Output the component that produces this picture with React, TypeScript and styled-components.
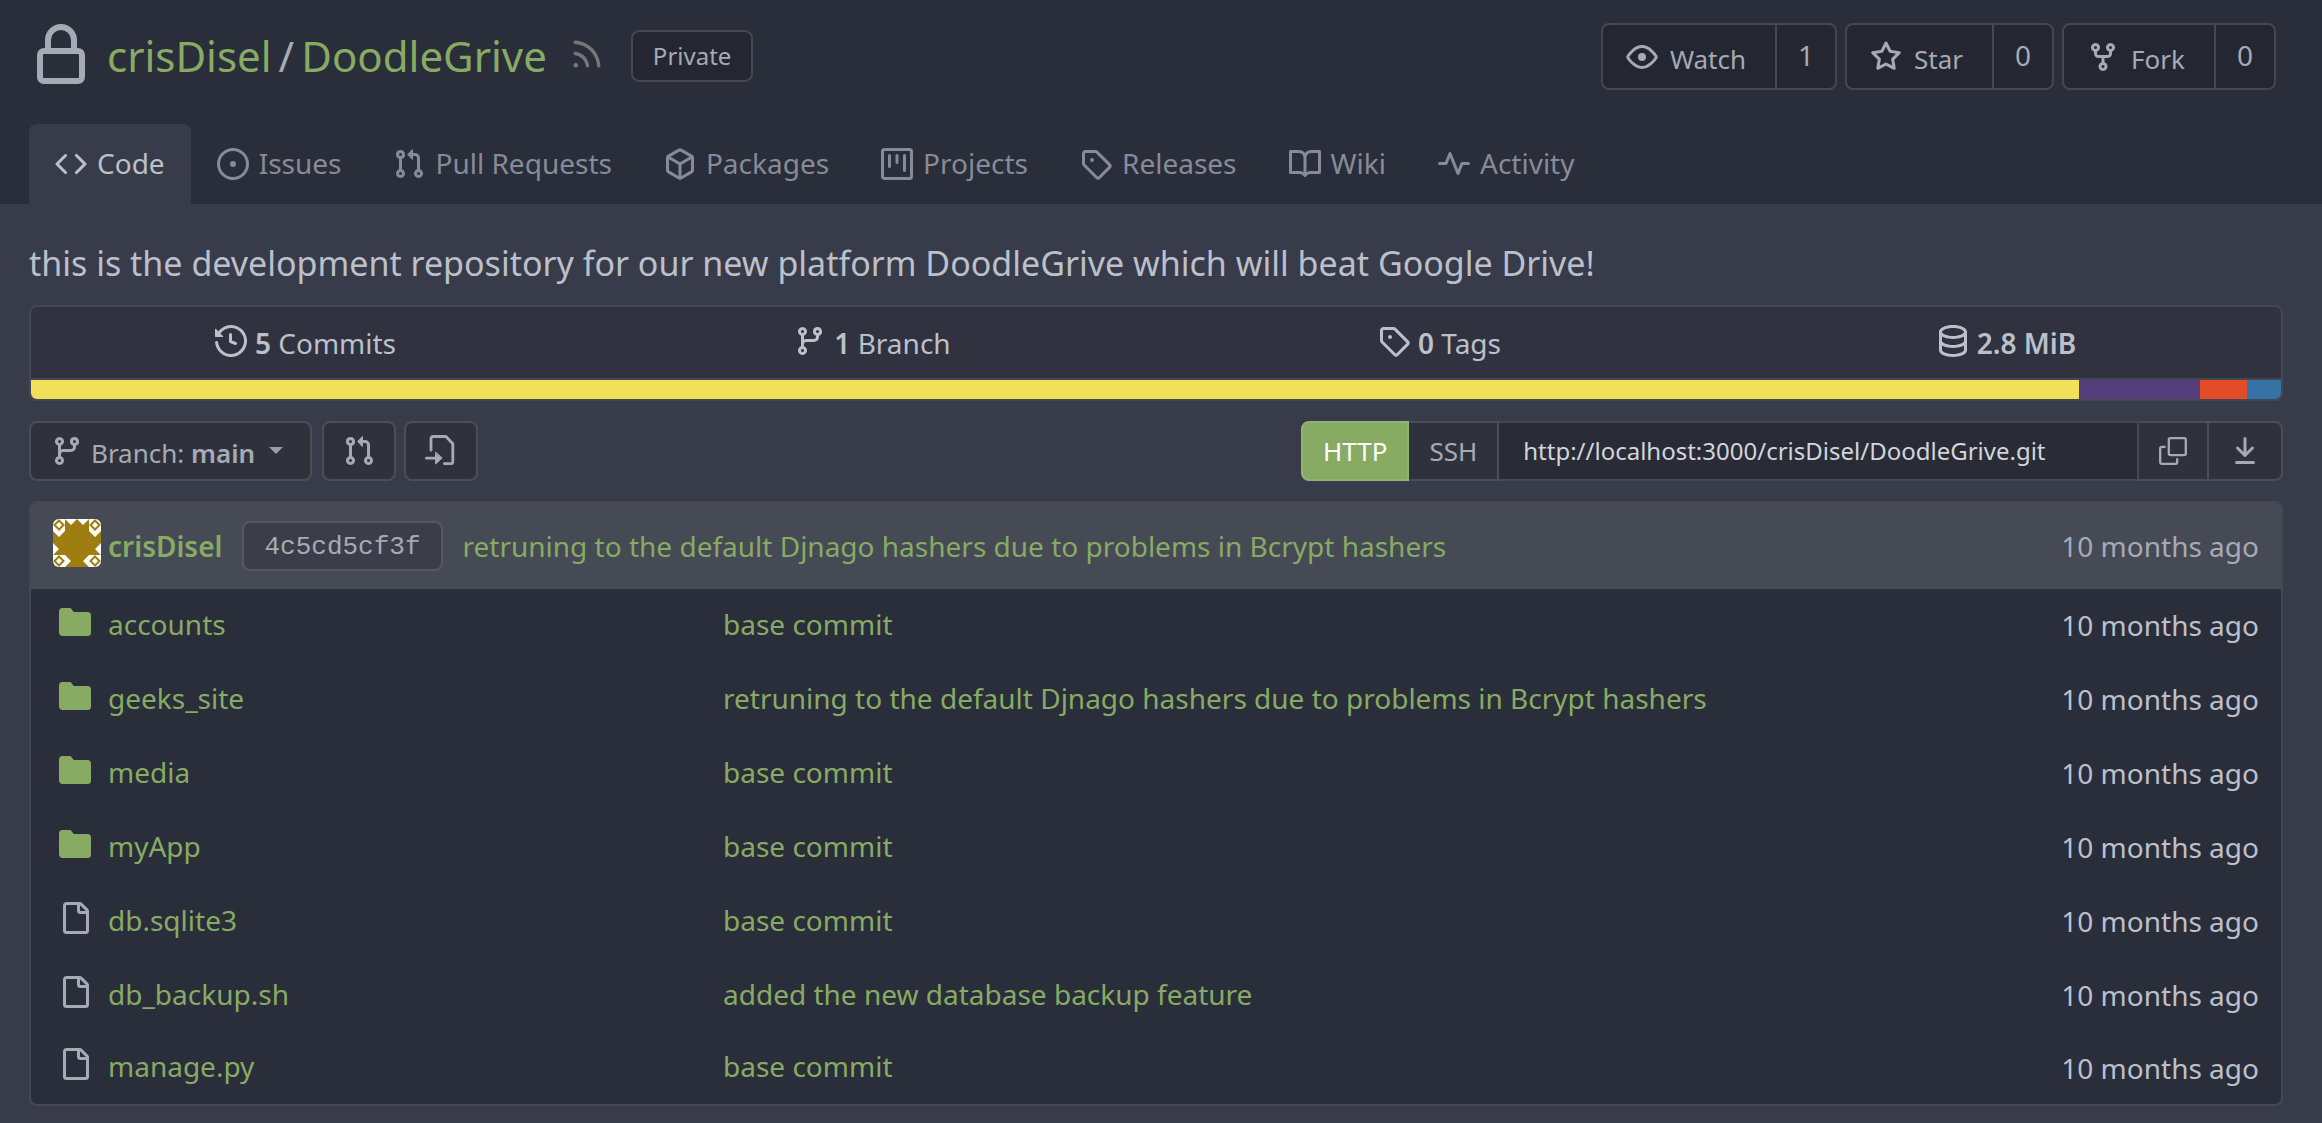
import React from "react";
import styled, { createGlobalStyle } from "styled-components";

const icons = {
  lock: "M4 4v2h-.25A1.75 1.75 0 002 7.75v5.5c0 .966.784 1.75 1.75 1.75h8.5A1.75 1.75 0 0014 13.25v-5.5A1.75 1.75 0 0012.25 6H12V4a4 4 0 10-8 0zm6.5 2V4a2.5 2.5 0 10-5 0v2h5zM12 7.5h.25a.25.25 0 01.25.25v5.5a.25.25 0 01-.25.25h-8.5a.25.25 0 01-.25-.25v-5.5a.25.25 0 01.25-.25H12z",
  rss: "M2.002 2.725a.75.75 0 01.797-.699C8.79 2.42 13.58 7.21 13.974 13.201a.75.75 0 01-1.497.098 10.502 10.502 0 00-9.776-9.776.75.75 0 01-.7-.798zM2 13a1 1 0 112 0 1 1 0 01-2 0zm.84-5.95a.75.75 0 00-.179 1.489c2.509.3 4.5 2.291 4.8 4.8a.75.75 0 101.49-.178A7.003 7.003 0 002.838 7.05z",
  eye: "M1.679 7.932c.412-.621 1.242-1.75 2.366-2.717C5.175 4.242 6.527 3.5 8 3.5c1.473 0 2.824.742 3.955 1.715 1.124.967 1.954 2.096 2.366 2.717a.119.119 0 010 .136c-.412.621-1.242 1.75-2.366 2.717C10.825 11.758 9.473 12.5 8 12.5c-1.473 0-2.824-.742-3.955-1.715C2.92 9.818 2.09 8.69 1.679 8.068a.119.119 0 010-.136zM8 2c-1.981 0-3.67.992-4.933 2.078C1.797 5.169.88 6.423.43 7.1a1.619 1.619 0 000 1.798c.45.678 1.367 1.932 2.637 3.024C4.329 13.008 6.019 14 8 14c1.981 0 3.67-.992 4.933-2.078 1.27-1.091 2.187-2.345 2.637-3.023a1.619 1.619 0 000-1.798c-.45-.678-1.367-1.932-2.637-3.023C11.671 2.992 9.981 2 8 2zm0 8a2 2 0 100-4 2 2 0 000 4z",
  star: "M8 .25a.75.75 0 01.673.418l1.882 3.815 4.21.612a.75.75 0 01.416 1.279l-3.046 2.97.719 4.192a.75.75 0 01-1.088.791L8 12.347l-3.766 1.98a.75.75 0 01-1.088-.79l.72-4.194L.818 6.374a.75.75 0 01.416-1.28l4.21-.611L7.327.668A.75.75 0 018 .25zm0 2.445L6.615 5.5a.75.75 0 01-.564.41l-3.097.45 2.24 2.184a.75.75 0 01.216.664l-.528 3.084 2.769-1.456a.75.75 0 01.698 0l2.77 1.456-.53-3.084a.75.75 0 01.216-.664l2.24-2.183-3.096-.45a.75.75 0 01-.564-.41L8 2.694v.001z",
  fork: "M5 3.25a.75.75 0 11-1.5 0 .75.75 0 011.5 0zm0 2.122a2.25 2.25 0 10-1.5 0v.878A2.25 2.25 0 005.75 8.5h1.5v2.128a2.251 2.251 0 101.5 0V8.5h1.5a2.25 2.25 0 002.25-2.25v-.878a2.25 2.25 0 10-1.5 0v.878a.75.75 0 01-.75.75h-4.5A.75.75 0 015 6.25v-.878zm3.75 7.378a.75.75 0 11-1.5 0 .75.75 0 011.5 0zm3-8.75a.75.75 0 100-1.5.75.75 0 000 1.5z",
  code: "M4.72 3.22a.75.75 0 011.06 1.06L2.06 8l3.72 3.72a.75.75 0 11-1.06 1.06L.47 8.53a.75.75 0 010-1.06l4.25-4.25zm6.56 0a.75.75 0 10-1.06 1.06L13.94 8l-3.72 3.72a.75.75 0 101.06 1.06l4.25-4.25a.75.75 0 000-1.06l-4.25-4.25z",
  issue: "M8 9.5a1.5 1.5 0 100-3 1.5 1.5 0 000 3zM8 0a8 8 0 100 16A8 8 0 008 0zM1.5 8a6.5 6.5 0 1113 0 6.5 6.5 0 01-13 0z",
  pull: "M7.177 3.073L9.573.677A.25.25 0 0110 .854v4.792a.25.25 0 01-.427.177L7.177 3.427a.25.25 0 010-.354zM3.75 2.5a.75.75 0 100 1.5.75.75 0 000-1.5zm-2.25.75a2.25 2.25 0 113 2.122v5.256a2.251 2.251 0 11-1.5 0V5.372A2.25 2.25 0 011.5 3.25zM11 2.5h-1V4h1a1 1 0 011 1v5.628a2.251 2.251 0 101.5 0V5A2.5 2.5 0 0011 2.5zm1 10.25a.75.75 0 111.5 0 .75.75 0 01-1.5 0zM3.75 12a.75.75 0 100 1.5.75.75 0 000-1.5z",
  package: "M8.878.392a1.75 1.75 0 00-1.756 0l-5.25 3.045A1.75 1.75 0 001 4.951v6.098c0 .624.332 1.2.872 1.514l5.25 3.045a1.75 1.75 0 001.756 0l5.25-3.045c.54-.313.872-.89.872-1.514V4.951c0-.624-.332-1.2-.872-1.514L8.878.392zM7.875 1.69a.25.25 0 01.25 0l4.63 2.685L8 7.133 3.245 4.375l4.63-2.685zM2.5 5.677v5.372c0 .09.047.171.125.216l4.625 2.683V8.432L2.5 5.677zm6.25 8.271l4.625-2.683a.25.25 0 00.125-.216V5.677L8.75 8.432v5.516z",
  project: "M1.75 0A1.75 1.75 0 000 1.75v12.5C0 15.216.784 16 1.75 16h12.5A1.75 1.75 0 0016 14.25V1.75A1.75 1.75 0 0014.25 0H1.75zM1.5 1.75a.25.25 0 01.25-.25h12.5a.25.25 0 01.25.25v12.5a.25.25 0 01-.25.25H1.75a.25.25 0 01-.25-.25V1.75zM11.75 3a.75.75 0 00-.75.75v7.5a.75.75 0 001.5 0v-7.5a.75.75 0 00-.75-.75zm-8.25.75a.75.75 0 011.5 0v5.5a.75.75 0 01-1.5 0v-5.5zM8 3a.75.75 0 00-.75.75v3.5a.75.75 0 001.5 0v-3.5A.75.75 0 008 3z",
  tag: "M2.5 7.775V2.75a.25.25 0 01.25-.25h5.025a.25.25 0 01.177.073l6.25 6.25a.25.25 0 010 .354l-5.025 5.025a.25.25 0 01-.354 0l-6.25-6.25a.25.25 0 01-.073-.177zm-1.5 0V2.75C1 1.784 1.784 1 2.75 1h5.025c.464 0 .91.184 1.238.513l6.25 6.25a1.75 1.75 0 010 2.474l-5.026 5.026a1.75 1.75 0 01-2.474 0l-6.25-6.25A1.75 1.75 0 011 7.775zM6 5a1 1 0 100 2 1 1 0 000-2z",
  book: "M0 1.75A.75.75 0 01.75 1h4.253c1.227 0 2.317.59 3 1.501A3.744 3.744 0 0111.006 1h4.245a.75.75 0 01.75.75v10.5a.75.75 0 01-.75.75h-4.507a2.25 2.25 0 00-1.591.659l-.622.621a.75.75 0 01-1.06 0l-.622-.621A2.25 2.25 0 005.258 13H.75a.75.75 0 01-.75-.75V1.75zm8.755 3a2.25 2.25 0 012.25-2.25H14.5v9h-3.757c-.71 0-1.4.201-1.992.572l.004-7.322zm-1.504 7.324l.004-5.073-.002-2.253A2.25 2.25 0 005.003 2.5H1.5v9h3.757a3.75 3.75 0 011.994.574z",
  pulse: "M6 2a.75.75 0 01.696.471L10 10.731l1.304-3.26A.75.75 0 0112 7h3.25a.75.75 0 010 1.5h-2.742l-1.812 4.528a.75.75 0 01-1.392 0L6 4.77 4.696 8.03A.75.75 0 014 8.5H.75a.75.75 0 010-1.5h2.742l1.812-4.529A.75.75 0 016 2z",
  history: "M1.643 3.143L.427 1.927A.25.25 0 000 2.104V5.75c0 .138.112.25.25.25h3.646a.25.25 0 00.177-.427L2.715 4.215a6.5 6.5 0 11-1.18 4.458.75.75 0 10-1.493.154 8.001 8.001 0 101.6-5.684zM7.75 4a.75.75 0 01.75.75v2.992l2.028.812a.75.75 0 01-.557 1.392l-2.5-1A.75.75 0 017 8.25v-3.5A.75.75 0 017.75 4z",
  branch: "M11.75 2.5a.75.75 0 100 1.5.75.75 0 000-1.5zm-2.25.75a2.25 2.25 0 113 2.122V6A2.5 2.5 0 0110 8.5H6a1 1 0 00-1 1v1.128a2.251 2.251 0 11-1.5 0V5.372a2.25 2.25 0 111.5 0v1.836A2.492 2.492 0 016 7h4a1 1 0 001-1v-.628A2.25 2.25 0 019.5 3.25zM4.25 12a.75.75 0 100 1.5.75.75 0 000-1.5zM3.5 3.25a.75.75 0 111.5 0 .75.75 0 01-1.5 0z",
  database: "M2.5 3.5c0-.133.058-.318.282-.55.227-.237.592-.484 1.1-.708C4.899 1.795 6.354 1.5 8 1.5c1.647 0 3.102.295 4.117.742.51.224.874.47 1.101.707.224.233.282.418.282.551 0 .133-.058.318-.282.55-.227.237-.592.484-1.1.708C11.101 5.205 9.646 5.5 8 5.5c-1.647 0-3.102-.295-4.117-.742-.51-.224-.874-.47-1.101-.707-.224-.233-.282-.418-.282-.551zM1 3.5c0-.626.292-1.165.7-1.59.406-.422.956-.767 1.579-1.041C4.525.32 6.195 0 8 0c1.805 0 3.475.32 4.722.869.622.274 1.172.62 1.578 1.04.408.426.7.965.7 1.591v9c0 .626-.292 1.165-.7 1.59-.406.422-.956.767-1.579 1.041C11.476 15.68 9.806 16 8 16c-1.805 0-3.475-.32-4.721-.869-.623-.274-1.173-.62-1.579-1.04-.408-.426-.7-.965-.7-1.591v-9zM2.5 8V5.724c.241.15.503.286.778.407C4.525 6.68 6.195 7 8 7c1.805 0 3.475-.32 4.722-.869.275-.121.537-.257.778-.407V8c0 .133-.058.318-.282.55-.227.237-.592.484-1.1.708C11.101 9.705 9.646 10 8 10c-1.647 0-3.102-.295-4.117-.742-.51-.224-.874-.47-1.101-.707C2.558 8.318 2.5 8.133 2.5 8zm0 2.225V12.5c0 .133.058.318.282.55.227.237.592.484 1.1.708 1.016.447 2.471.742 4.118.742 1.647 0 3.102-.295 4.117-.742.51-.224.874-.47 1.101-.707.224-.233.282-.418.282-.551v-2.275c-.241.15-.503.285-.778.406-1.247.549-2.917.869-4.722.869-1.805 0-3.475-.32-4.721-.869a6.236 6.236 0 01-.779-.406z",
  download: "M7.47 10.78a.75.75 0 001.06 0l3.75-3.75a.75.75 0 00-1.06-1.06L8.75 8.439V1.75a.75.75 0 00-1.5 0V8.44L4.78 5.97a.75.75 0 00-1.06 1.06l3.75 3.75zM3.75 13a.75.75 0 000 1.5h8.5a.75.75 0 000-1.5h-8.5z",
  file: "M2 1.75C2 .784 2.784 0 3.75 0h6.586c.464 0 .909.184 1.237.513l2.914 2.914c.329.328.513.773.513 1.237v9.586A1.75 1.75 0 0113.25 16h-9.5A1.75 1.75 0 012 14.25V1.75zm1.75-.25a.25.25 0 00-.25.25v12.5c0 .138.112.25.25.25h9.5a.25.25 0 00.25-.25V6h-2.75A1.75 1.75 0 019 4.25V1.5H3.75zm6.75.062V4.25c0 .138.112.25.25.25h2.688l-.011-.013-2.914-2.914-.013-.011z",
  folder: "M1.75 1A1.75 1.75 0 000 2.75v10.5C0 14.216.784 15 1.75 15h12.5A1.75 1.75 0 0016 13.25v-8.5A1.75 1.75 0 0014.25 3H7.5a.25.25 0 01-.2-.1l-.9-1.2C6.07 1.26 5.55 1 5 1H1.75z",
};
type IconName = keyof typeof icons;

const Svg = styled.svg<{ $size?: number }>`
  width: ${(p) => p.$size ?? 32}px;
  height: ${(p) => p.$size ?? 32}px;
  flex: none;
  display: block;
  fill: currentColor;
`;
const Icon = ({ name, size }: { name: IconName; size?: number }) => (
  <Svg $size={size} viewBox="0 0 16 16" aria-hidden="true">
    <path fillRule="evenodd" d={icons[name]} />
  </Svg>
);

const GlobalStyle = createGlobalStyle`
  *, *::before, *::after { box-sizing: border-box; }
  body {
    margin: 0;
    background: #383b4a;
    color: #bbc0ca;
    font: 28px/36px "Noto Sans", sans-serif;
  }
  a { color: #87ab63; text-decoration: none; }
  button, input { font: inherit; margin: 0; }
`;

const Header = styled.header`
  background: #2a2e3a;
`;
const TitleBar = styled.div`
  display: flex;
  justify-content: space-between;
  padding: 23px 46px 0 29px;
  height: 124px;
`;
const Title = styled.h1`
  display: flex;
  align-items: center;
  height: 66px;
  margin: 0;
  font-size: 42px;
  line-height: 56px;
  font-weight: 400;
  color: #a6aab5;
`;
const RepoPath = styled.span`
  display: flex;
  gap: 7px;
  margin: 0 22px 0 14px;
`;
const Rss = styled.a`
  color: #777;
  margin-right: 26px;
  padding-bottom: 4px;
`;
const Label = styled.span`
  border: 2px solid #46484f;
  border-radius: 8px;
  background: #242731;
  color: #a6aab5;
  padding: 8px 20px;
  font-size: 24px;
  line-height: 32px;
`;
const Actions = styled.div`
  display: flex;
  gap: 8px;
`;
const Split = styled.div`
  display: flex;
  height: 67px;
  border: 2px solid #46484f;
  border-radius: 8px;
  background: #242731;
  overflow: hidden;
`;
const SplitButton = styled.button`
  display: flex;
  align-items: center;
  gap: 12px;
  border: 0;
  border-right: 2px solid #46484f;
  background: none;
  color: #a6aab5;
  padding: 0 29px 0 23px;
  font-size: 26px;
  line-height: 36px;

  span { padding-top: 4px; }
`;
const SplitCount = styled.a`
  display: flex;
  align-items: center;
  padding: 0 21px 4px;
  color: #a6aab5;
`;
const Tabs = styled.nav`
  display: flex;
  height: 80px;
  padding-left: 29px;
`;
const Tab = styled.a<{ $active?: boolean }>`
  display: flex;
  align-items: center;
  gap: 10px;
  padding: 0 26px;
  border-radius: 8px 8px 0 0;
  color: ${(p) => (p.$active ? "#bbc0ca" : "#878b97")};
  background: ${(p) => (p.$active ? "#383b4a" : "transparent")};

  span { padding-bottom: 2px; }
`;

const Main = styled.main`
  padding: 37px 39px 0 29px;
`;
const Description = styled.p`
  margin: 0 0 19px;
  font-size: 34px;
  line-height: 45px;
`;
const Summary = styled.section`
  border: 2px solid #454852;
  border-radius: 8px;
  background: #30333f;
  overflow: hidden;
`;
const Stats = styled.div`
  display: grid;
  grid-template-columns: repeat(4, 1fr);
  height: 73px;
  margin: 0 -9px;
  border-bottom: 2px solid #454852;
`;
const Stat = styled.a`
  display: flex;
  align-items: center;
  justify-content: center;
  gap: 8px;
  color: #bbc0ca;

  svg { margin-bottom: 4px; }
  b { font-weight: 600; }
`;
const Languages = styled.div`
  display: flex;
  height: 19px;
`;
const Language = styled.span<{ $share: number; $color: string }>`
  flex: ${(p) => p.$share} 0 0;
  background: ${(p) => p.$color};
`;

const Toolbar = styled.div`
  display: flex;
  justify-content: space-between;
  gap: 24px;
  margin: 20px 0;
  height: 60px;
`;
const ToolGroup = styled.div`
  display: flex;
  gap: 8px;
`;
const ToolButton = styled.button`
  display: flex;
  align-items: center;
  justify-content: center;
  padding: 0 19px;
  border: 2px solid #4b4e57;
  border-radius: 8px;
  background: #2f323d;
  color: #a6aab5;
`;
const BranchButton = styled(ToolButton)`
  gap: 8px;
  padding: 0 27px 0 20px;
  margin-right: 2px;
  font-size: 26px;

  b { font-weight: 600; }
  span { padding-top: 4px; }
`;
const Caret = styled.i`
  border: 7px solid transparent;
  border-top-color: currentColor;
  border-bottom: 0;
  margin: 0 0 2px 6px;
  opacity: 0.9;
`;
const ClonePanel = styled.div`
  display: flex;
  width: 982px;
`;
const CloneButton = styled.button<{ $active?: boolean; $edge?: "left" | "right" }>`
  display: flex;
  align-items: center;
  justify-content: center;
  padding: 0 20px;
  border: 2px solid ${(p) => (p.$active ? "#93b373" : "#4b4e57")};
  border-left-width: ${(p) => (p.$edge === "left" ? 2 : 0)}px;
  border-radius: ${(p) =>
    p.$edge === "left" ? "8px 0 0 8px" : p.$edge === "right" ? "0 8px 8px 0" : "0"};
  background: ${(p) => (p.$active ? "#87ab63" : "#2f323d")};
  color: ${(p) => (p.$active ? "#fff" : "#a6aab5")};
  font-size: 26px;
`;
const CopyButton = styled(CloneButton)`
  padding: 0 18px;
`;
const CloneUrl = styled.input`
  flex: 1;
  min-width: 0;
  border: 2px solid #454852;
  border-left: 0;
  border-radius: 0;
  background: #292c37;
  color: #d2d5dc;
  padding: 0 24px;
  font-size: 24px;
  outline: 0;
`;

const FileBox = styled.div`
  border: 2px solid #454852;
  border-radius: 8px;
  background: #2a2e3a;
  overflow: hidden;
`;
const FileTable = styled.table`
  width: 100%;
  border-collapse: collapse;
  table-layout: fixed;
`;
const NameCol = styled.col`
  width: 692px;
`;
const AgeCol = styled.col`
  width: 300px;
`;
const LatestCell = styled.th`
  height: 86px;
  padding: 0 22px;
  background: #454a55;
  font-weight: 400;
  text-align: left;
`;
const Latest = styled.div`
  display: flex;
  align-items: center;
`;
const Author = styled.a`
  display: flex;
  align-items: center;
  gap: 7px;
  font-weight: 600;
  margin-right: 20px;

  svg { margin-bottom: 6px; }
`;
const Hash = styled.a`
  border: 2px solid #565962;
  border-radius: 8px;
  background: #3b3e49;
  color: #a6aab5;
  padding: 7px 20px 5px;
  margin-right: 20px;
  font: 26px/34px "Liberation Mono", monospace;
`;
const LatestAge = styled.span`
  margin-left: auto;
  color: #a6aab5;
`;
const FileRow = styled.tr`
  height: 74px;

  &:last-child { height: 71px; }
`;
const Cell = styled.td`
  padding: 0 22px 5px 0;
`;
const AgeCell = styled(Cell)`
  padding-bottom: 2px;
  text-align: right;
`;
const NameCell = styled(Cell)<{ $folder: boolean }>`
  padding-left: 28px;

  div { display: flex; align-items: center; gap: 17px; }
  svg { color: ${(p) => (p.$folder ? "#87ab63" : "#a6aab5")}; margin-bottom: 4px; }
`;

const tabs: [IconName, string][] = [
  ["code", "Code"],
  ["issue", "Issues"],
  ["pull", "Pull Requests"],
  ["package", "Packages"],
  ["project", "Projects"],
  ["tag", "Releases"],
  ["book", "Wiki"],
  ["pulse", "Activity"],
];
const actions: [IconName, string, number][] = [
  ["eye", "Watch", 1],
  ["star", "Star", 0],
  ["fork", "Fork", 0],
];
const stats: [IconName, string, string][] = [
  ["history", "5", " Commits"],
  ["branch", "1", " Branch"],
  ["tag", "0", " Tags"],
  ["database", "2.8 MiB", ""],
];
const languages: [string, number, string][] = [
  ["JavaScript", 910, "#f1e05a"],
  ["CSS", 54, "#563d7c"],
  ["HTML", 21, "#e34c26"],
  ["Python", 15, "#3572a5"],
];
const latestMessage = "retruning to the default Djnago hashers due to problems in Bcrypt hashers";
const files: [IconName, string, string][] = [
  ["folder", "accounts", "base commit"],
  ["folder", "geeks_site", latestMessage],
  ["folder", "media", "base commit"],
  ["folder", "myApp", "base commit"],
  ["file", "db.sqlite3", "base commit"],
  ["file", "db_backup.sh", "added the new database backup feature"],
  ["file", "manage.py", "base commit"],
];

const AvatarSvg = styled(Svg)`
  width: 48px;
  height: 48px;
  border-radius: 6px;
`;
const Avatar = () => (
  <AvatarSvg viewBox="0 0 48 48" role="img" aria-label="crisDisel avatar">
    <path fill="#9e7e10" d="M0 0h48v48H0z" />
    <path
      fill="#fff"
      d="M0 0h12v12L6 18 0 12zM36 0h12v12l-6 6-6-6zM12 0h24l-6 6-6-6-6 6zM0 24l6 6-6 6zM48 24l-6 6 6 6zM0 36h12l6 6-6 6H0zM48 36H36l-6 6 6 6h12z"
    />
    {[[6, 6], [42, 6], [6, 42], [42, 42]].map(([x, y]) => (
      <path
        key={`${x}-${y}`}
        fill="#fff"
        stroke="#9e7e10"
        strokeWidth="2"
        d={`M${x} ${y - 4.5}l4.5 4.5-4.5 4.5-4.5-4.5z`}
      />
    ))}
  </AvatarSvg>
);

const LineSvg = styled(Svg)`
  fill: none;
  stroke: currentColor;
  stroke-linecap: round;
  stroke-linejoin: round;
`;
const CopyIcon = () => (
  <LineSvg viewBox="0 0 16 16" strokeWidth="1.15" aria-hidden="true">
    <rect x="5.9" y="1.6" width="8.5" height="8.5" rx="0.8" />
    <path d="M3.9 5.9H2.4a.8.8 0 0 0-.8.8v6.9a.8.8 0 0 0 .8.8h6.9a.8.8 0 0 0 .8-.8v-1.5" />
  </LineSvg>
);
const GoToFileIcon = () => (
  <LineSvg viewBox="0 0 16 16" strokeWidth="1.4" aria-hidden="true">
    <path d="M3 7.6V1.75a1 1 0 0 1 1-1h6.5l3.4 3.6v9a1 1 0 0 1-1 1H9.7" />
    <path d="M.75 11.6H6" />
    <path fill="currentColor" strokeWidth="0.5" d="M5.3 8.7v5.8l3.2-2.9z" />
  </LineSvg>
);

export default function App() {
  return (
    <>
      <GlobalStyle />
      <Header>
        <TitleBar>
          <Title>
            <Icon name="lock" size={64} />
            <RepoPath>
              <a href="#owner">crisDisel</a>
              <span>/</span>
              <a href="#repo">DoodleGrive</a>
            </RepoPath>
            <Rss href="#rss" aria-label="RSS feed">
              <Icon name="rss" size={36} />
            </Rss>
            <Label>Private</Label>
          </Title>
          <Actions>
            {actions.map(([icon, label, count]) => (
              <Split key={label}>
                <SplitButton type="button">
                  <Icon name={icon} />
                  <span>{label}</span>
                </SplitButton>
                <SplitCount href={`#${label}`}>{count}</SplitCount>
              </Split>
            ))}
          </Actions>
        </TitleBar>
        <Tabs>
          {tabs.map(([icon, label], i) => (
            <Tab key={label} href={`#${icon}`} $active={i === 0}>
              <Icon name={icon} />
              <span>{label}</span>
            </Tab>
          ))}
        </Tabs>
      </Header>
      <Main>
        <Description>
          this is the development repository for our new platform DoodleGrive which will beat Google Drive!
        </Description>
        <Summary>
          <Stats>
            {stats.map(([icon, value, label]) => (
              <Stat key={icon} href={`#${icon}`}>
                <Icon name={icon} />
                <span>
                  <b>{value}</b>
                  {label}
                </span>
              </Stat>
            ))}
          </Stats>
          <Languages>
            {languages.map(([name, share, color]) => (
              <Language key={name} title={name} $share={share} $color={color} />
            ))}
          </Languages>
        </Summary>
        <Toolbar>
          <ToolGroup>
            <BranchButton type="button">
              <Icon name="branch" />
              <span>
                Branch: <b>main</b>
              </span>
              <Caret />
            </BranchButton>
            <ToolButton type="button" aria-label="New pull request">
              <Icon name="pull" />
            </ToolButton>
            <ToolButton type="button" aria-label="Go to file">
              <GoToFileIcon />
            </ToolButton>
          </ToolGroup>
          <ClonePanel>
            <CloneButton type="button" $active $edge="left">
              HTTP
            </CloneButton>
            <CloneButton type="button">SSH</CloneButton>
            <CloneUrl
              aria-label="Clone URL"
              readOnly
              value="http://localhost:3000/crisDisel/DoodleGrive.git"
            />
            <CopyButton type="button" aria-label="Copy URL">
              <CopyIcon />
            </CopyButton>
            <CloneButton type="button" $edge="right" aria-label="Download">
              <Icon name="download" />
            </CloneButton>
          </ClonePanel>
        </Toolbar>
        <FileBox>
          <FileTable>
            <colgroup>
              <NameCol />
              <col />
              <AgeCol />
            </colgroup>
            <thead>
              <tr>
                <LatestCell colSpan={3}>
                  <Latest>
                    <Author href="#author">
                      <Avatar />
                      crisDisel
                    </Author>
                    <Hash href="#commit">4c5cd5cf3f</Hash>
                    <a href="#commit">{latestMessage}</a>
                    <LatestAge>10 months ago</LatestAge>
                  </Latest>
                </LatestCell>
              </tr>
            </thead>
            <tbody>
              {files.map(([icon, name, message]) => (
                <FileRow key={name}>
                  <NameCell $folder={icon === "folder"}>
                    <div>
                      <Icon name={icon} />
                      <a href={`#${name}`}>{name}</a>
                    </div>
                  </NameCell>
                  <Cell>
                    <a href="#commit">{message}</a>
                  </Cell>
                  <AgeCell>10 months ago</AgeCell>
                </FileRow>
              ))}
            </tbody>
          </FileTable>
        </FileBox>
      </Main>
    </>
  );
}
